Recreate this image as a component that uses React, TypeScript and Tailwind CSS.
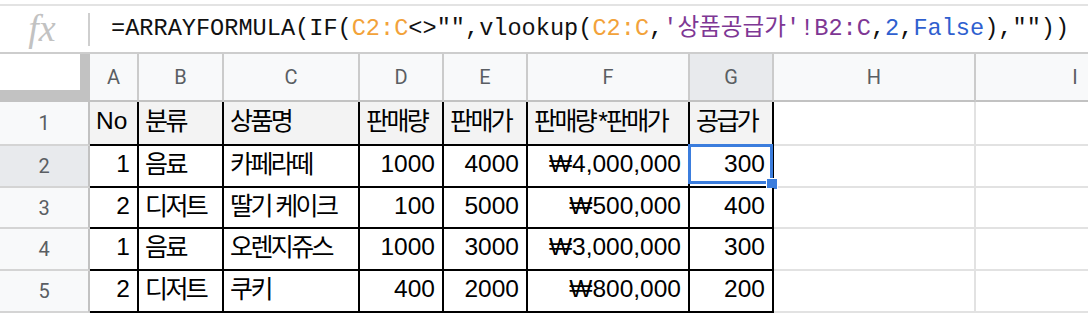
import React from "react";

type Cell = { t: string; r?: boolean; k?: boolean };

const cols = [
  { w: "w-[49px]", h: "A" },
  { w: "w-[85px]", h: "B" },
  { w: "w-[136px]", h: "C" },
  { w: "w-[84px]", h: "D" },
  { w: "w-[84px]", h: "E" },
  { w: "w-[162px]", h: "F" },
  { w: "w-[84px]", h: "G" },
  { w: "w-[202px]", h: "H" },
  { w: "w-[200px]", h: "I" },
];

const rows: { n: string; h: string; cells: Cell[] }[] = [
  {
    n: "1",
    h: "h-[44px]",
    cells: [
      { t: "No" },
      { t: "분류", k: true },
      { t: "상품명", k: true },
      { t: "판매량", k: true },
      { t: "판매가", k: true },
      { t: "판매량*판매가", k: true },
      { t: "공급가", k: true },
    ],
  },
  {
    n: "2",
    h: "h-[42px]",
    cells: [
      { t: "1", r: true },
      { t: "음료", k: true },
      { t: "카페라떼", k: true },
      { t: "1000", r: true },
      { t: "4000", r: true },
      { t: "₩4,000,000", r: true },
      { t: "300", r: true },
    ],
  },
  {
    n: "3",
    h: "h-[41px]",
    cells: [
      { t: "2", r: true },
      { t: "디저트", k: true },
      { t: "딸기 케이크", k: true },
      { t: "100", r: true },
      { t: "5000", r: true },
      { t: "₩500,000", r: true },
      { t: "400", r: true },
    ],
  },
  {
    n: "4",
    h: "h-[42px]",
    cells: [
      { t: "1", r: true },
      { t: "음료", k: true },
      { t: "오렌지쥬스", k: true },
      { t: "1000", r: true },
      { t: "3000", r: true },
      { t: "₩3,000,000", r: true },
      { t: "300", r: true },
    ],
  },
  {
    n: "5",
    h: "h-[42px]",
    cells: [
      { t: "2", r: true },
      { t: "디저트", k: true },
      { t: "쿠키", k: true },
      { t: "400", r: true },
      { t: "2000", r: true },
      { t: "₩800,000", r: true },
      { t: "200", r: true },
    ],
  },
];

function renderText(t: string) {
  if (!t.includes("*")) return t;
  const [a, b] = t.split("*");
  return (
    <>
      {a}
      <span className="tracking-normal font-['Liberation_Sans',sans-serif] ml-[3px] mr-[-2px]">*</span>
      {b}
    </>
  );
}

export default function App() {
  return (
    <div className="w-[1088px] h-[314px] overflow-hidden bg-white">
      <div className="h-[4px]" />
      {/* Formula bar */}
      <div className="h-[50px] border-t-2 border-b-2 border-t-[#e3e3e3] border-b-[#cdcdcd] flex items-center">
        <div className="w-[88px] shrink-0 flex items-center justify-center">
          <span className="font-['Liberation_Serif',serif] italic text-[38px] leading-none text-[#c2c2c2] -mt-[2px] -ml-[4px]">
            fx
          </span>
        </div>
        <div className="w-[2px] h-[33px] bg-[#cfcfcf] shrink-0" />
        <div className="ml-[21px] whitespace-nowrap font-['Liberation_Mono','Noto_Sans_CJK_KR',monospace] text-[23.6px] leading-none text-[#111]">
          =ARRAYFORMULA(IF(<span className="text-[#f2a23a]">C2:C</span>&lt;&gt;"",vlookup(
          <span className="text-[#f2a23a]">C2:C</span>,
          <span className="text-[#7e3794]">'상품공급가'!B2:C</span>,
          <span className="text-[#2f5fcf]">2</span>,
          <span className="text-[#2f5fcf]">False</span>),""))
        </div>
      </div>

      {/* Column header row */}
      <div className="flex h-[48px] font-['Roboto','Liberation_Sans',sans-serif] text-[20px] text-[#5a5e63]">
        <div className="w-[90px] shrink-0 bg-white border-r-[10px] border-b-[12px] border-[#c2c2c2]" />
        {cols.map((c) => (
          <div
            key={c.h}
            className={`${c.w} shrink-0 flex items-center justify-center border-r-2 border-b-2 border-r-[#cbcbcb] border-b-[#c2c2c2] ${
              c.h === "G" ? "bg-[#e8eaed]" : "bg-[#f8f9fa]"
            }`}
          >
            {c.h}
          </div>
        ))}
      </div>

      {/* Data rows */}
      {rows.map((row) => (
        <div key={row.n} className={`flex ${row.h}`}>
          <div
            className={`w-[90px] shrink-0 flex items-center justify-center border-r-2 border-b-2 border-r-[#c2c2c2] border-b-[#d4d4d4] font-['Roboto','Liberation_Sans',sans-serif] text-[20px] text-[#5a5e63] ${
              row.n === "2" ? "bg-[#e8eaed]" : "bg-[#f8f9fa]"
            }`}
          >
            {row.n}
          </div>
          {cols.map((c, i) => {
            const cell = row.cells[i];
            if (!cell) {
              return (
                <div
                  key={c.h}
                  className={`${c.w} shrink-0 border-b-2 border-[#e2e2e2] ${c.h === "H" ? "border-r-2" : ""}`}
                />
              );
            }
            const isSel = row.n === "2" && c.h === "G";
            return (
              <div
                key={c.h}
                className={`${c.w} shrink-0 relative flex items-center pb-[3px] border-r-2 border-b-2 border-black whitespace-nowrap font-['Liberation_Sans','Noto_Sans_CJK_KR',sans-serif] leading-none text-black ${
                  row.n === "1" ? "bg-[#f3f3f3]" : "bg-white"
                } ${cell.r ? "justify-end pr-[7px]" : "justify-start pl-[6px]"} ${
                  cell.k ? "tracking-[-2.6px] text-[25px]" : "text-[24.5px]"
                }`}
              >
                <span>{renderText(cell.t)}</span>
                {isSel && (
                  <>
                    <div className="absolute left-[-2px] top-[-2px] w-[85px] h-[40px] border-[3px] border-[#3b7ddd]" />
                    <div className="absolute left-[76px] top-[32px] w-[12px] h-[12px] bg-[#3b7ddd] border border-white" />
                  </>
                )}
              </div>
            );
          })}
        </div>
      ))}
    </div>
  );
}
